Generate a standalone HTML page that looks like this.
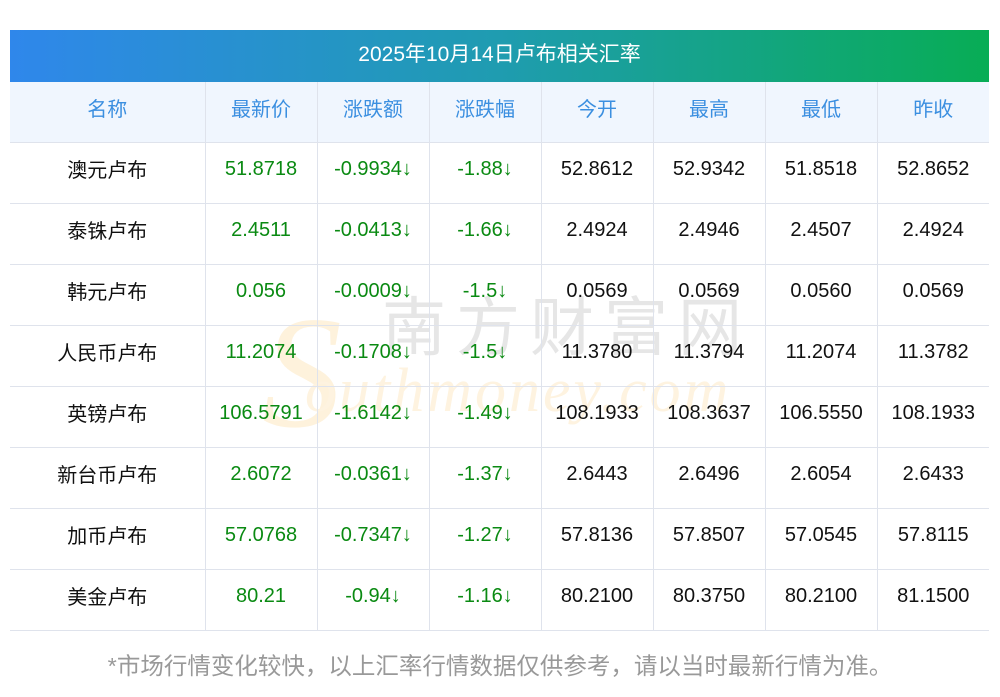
<!DOCTYPE html>
<html><head><meta charset="utf-8"><style>
body{margin:0;width:1000px;height:697px;background:#fff;font-family:"Liberation Sans","Noto Sans CJK SC",sans-serif;position:relative;overflow:hidden}
.title{position:absolute;left:10px;top:30px;width:979px;height:52px;background:linear-gradient(90deg,#2f87eb,#1f9cb0 50%,#08ad55);color:#fff;font-size:21px;text-align:center;line-height:50px}
table{position:absolute;left:10px;top:82px;border-collapse:collapse;width:979px;table-layout:fixed}
td,th{border:1px solid #dfe3ec;text-align:center;height:52px;padding:0 0 8px 0;font-size:20px;font-weight:normal;color:#111;line-height:24px}
td:first-child,th{padding:0 0 4px 0;height:56px}
tr>*:first-child{border-left:none}
tr>*:last-child{border-right:none}
th{background:#f0f6fe;color:#3b8fe0;border-top:none}
.g{color:#0a8a12}
.wm{position:absolute;pointer-events:none}
.foot{position:absolute;left:0;width:1000px;top:647px;text-align:center;color:#999;font-size:23.5px}
</style></head><body>
<div class="title">2025年10月14日卢布相关汇率</div>
<div class="wm" style="left:262px;top:292px;font-family:'Liberation Serif',serif;font-style:italic;font-size:160px;color:#fef2dc;line-height:1">S</div>
<div class="wm" style="left:382px;top:296px;font-size:64px;color:#e6e6e6;letter-spacing:10px;line-height:1">南方财富网</div>
<div class="wm" style="left:305px;top:360px;font-family:'Liberation Serif',serif;font-style:italic;font-size:62px;color:#fef3e0;letter-spacing:3px;line-height:1">outhmoney.com</div>
<table>
<colgroup><col style="width:195px"><col span="7" style="width:112px"></colgroup>
<tr><th>名称</th><th>最新价</th><th>涨跌额</th><th>涨跌幅</th><th>今开</th><th>最高</th><th>最低</th><th>昨收</th></tr>
<tr><td>澳元卢布</td><td class="g">51.8718</td><td class="g">-0.9934↓</td><td class="g">-1.88↓</td><td>52.8612</td><td>52.9342</td><td>51.8518</td><td>52.8652</td></tr>
<tr><td>泰铢卢布</td><td class="g">2.4511</td><td class="g">-0.0413↓</td><td class="g">-1.66↓</td><td>2.4924</td><td>2.4946</td><td>2.4507</td><td>2.4924</td></tr>
<tr><td>韩元卢布</td><td class="g">0.056</td><td class="g">-0.0009↓</td><td class="g">-1.5↓</td><td>0.0569</td><td>0.0569</td><td>0.0560</td><td>0.0569</td></tr>
<tr><td>人民币卢布</td><td class="g">11.2074</td><td class="g">-0.1708↓</td><td class="g">-1.5↓</td><td>11.3780</td><td>11.3794</td><td>11.2074</td><td>11.3782</td></tr>
<tr><td>英镑卢布</td><td class="g">106.5791</td><td class="g">-1.6142↓</td><td class="g">-1.49↓</td><td>108.1933</td><td>108.3637</td><td>106.5550</td><td>108.1933</td></tr>
<tr><td>新台币卢布</td><td class="g">2.6072</td><td class="g">-0.0361↓</td><td class="g">-1.37↓</td><td>2.6443</td><td>2.6496</td><td>2.6054</td><td>2.6433</td></tr>
<tr><td>加币卢布</td><td class="g">57.0768</td><td class="g">-0.7347↓</td><td class="g">-1.27↓</td><td>57.8136</td><td>57.8507</td><td>57.0545</td><td>57.8115</td></tr>
<tr><td>美金卢布</td><td class="g">80.21</td><td class="g">-0.94↓</td><td class="g">-1.16↓</td><td>80.2100</td><td>80.3750</td><td>80.2100</td><td>81.1500</td></tr>
</table>
<div class="foot">*市场行情变化较快，以上汇率行情数据仅供参考，请以当时最新行情为准。</div>
</body></html>
